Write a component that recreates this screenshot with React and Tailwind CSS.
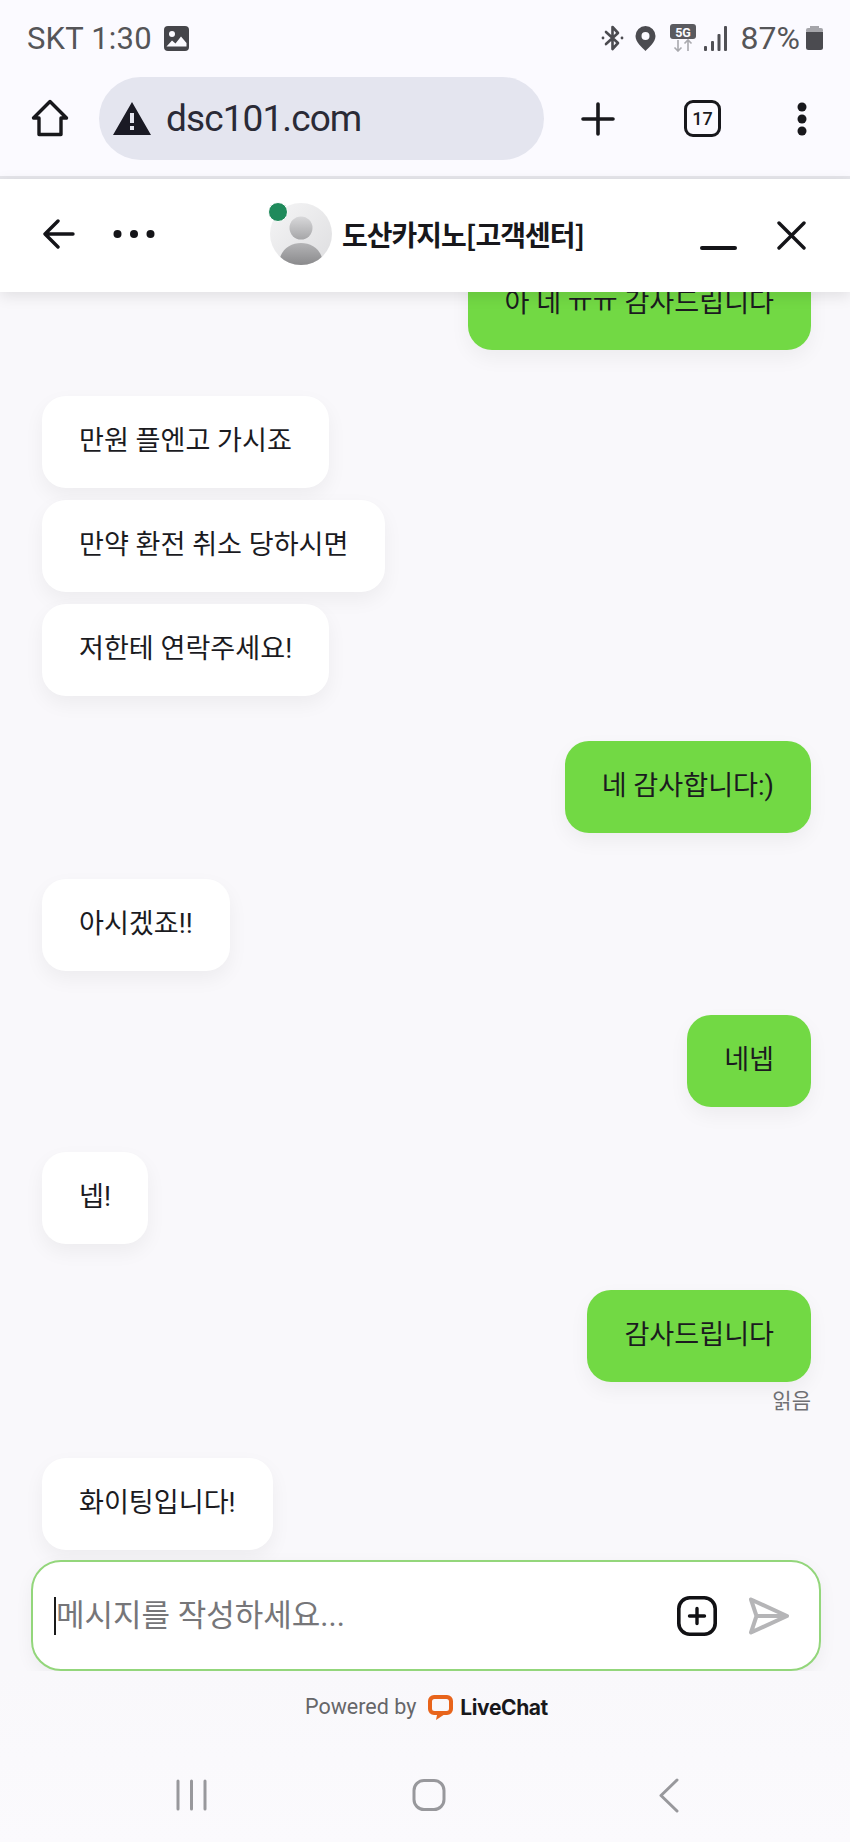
const KR = "font-['Noto_Sans_CJK_KR','Noto_Sans',sans-serif]";

function Bubble({ mine, children, className = "" }) {
  return (
    <div
      className={[
        "h-[92px] flex items-center px-[37px] pb-[2px] rounded-[24px] text-[27.1px] leading-[36px] whitespace-nowrap text-[#1b1b1f] font-['Roboto','Noto_Sans_CJK_KR',sans-serif] shadow-[0_8px_20px_rgba(0,0,0,0.05)]",
        mine ? "self-end mr-[39px] bg-[#72d944]" : "self-start ml-[42px] bg-white",
        className,
      ].join(" ")}
    >
      {children}
    </div>
  );
}

function StatusBar() {
  return (
    <div className="h-[77px] flex items-center pl-[27px] pr-[27px] pb-[1px] text-[#555558] font-['Roboto',sans-serif]">
      <span className="text-[31px] leading-none tracking-[0.2px]">SKT 1:30</span>
      <svg className="ml-[12px]" width="25" height="25" viewBox="0 0 25 25">
        <rect width="25" height="25" rx="4" fill="#45454a" />
        <circle cx="8" cy="8" r="3" fill="#fbfaff" />
        <path d="M2.5 20.5 L8 14.5 L11.5 17.5 L17 10.5 L22.5 17 V20.5 Z" fill="#fbfaff" />
      </svg>
      <div className="flex-1" />
      <svg width="23" height="28" viewBox="0 0 23 28" fill="none" stroke="#4b4b50" strokeWidth="2.6" strokeLinejoin="round" strokeLinecap="round">
        <path d="M5 8 L17 19 L11.5 25 V3 L17 9 L5 20" />
        <circle cx="2" cy="14" r="1.4" fill="#4b4b50" stroke="none" />
        <circle cx="21" cy="14" r="1.4" fill="#4b4b50" stroke="none" />
      </svg>
      <svg className="ml-[11px]" width="21" height="25" viewBox="0 0 21 25">
        <path fillRule="evenodd" d="M10.5 0 A10 10 0 0 1 20.5 10 C20.5 16 14 21.5 10.5 25 C7 21.5 0.5 16 0.5 10 A10 10 0 0 1 10.5 0 Z M10.5 6 A4 4 0 1 0 10.5 14 A4 4 0 1 0 10.5 6 Z" fill="#4b4b50" />
      </svg>
      <svg className="ml-[14px]" width="26" height="28" viewBox="0 0 26 28">
        <rect width="26" height="15" rx="3" fill="#5a5a5f" />
        <text x="13" y="12.5" textAnchor="middle" fontSize="12.5" fontWeight="700" fill="#fbfaff" fontFamily="Roboto">5G</text>
        <path d="M8 16 V27 M4.5 23.5 L8 27 L11.5 23.5" stroke="#a9a9ae" strokeWidth="1.6" fill="none" />
        <path d="M18 27 V16 M14.5 19.5 L18 16 L21.5 19.5" stroke="#a9a9ae" strokeWidth="1.6" fill="none" />
      </svg>
      <svg className="ml-[8px]" width="23" height="25" viewBox="0 0 23 25" fill="#4f4f54">
        <rect x="0" y="20" width="3" height="5" rx="1" />
        <rect x="7" y="15" width="3" height="10" rx="1" />
        <rect x="13.5" y="8" width="3" height="17" rx="1" />
        <rect x="20" y="0" width="3" height="25" rx="1" />
      </svg>
      <span className="ml-[14px] text-[32px] leading-none">87%</span>
      <svg className="ml-[6px]" width="17" height="24" viewBox="0 0 17 24">
        <rect x="4" width="9" height="3" fill="#a5a5aa" />
        <rect y="2" width="17" height="5" rx="2" fill="#a5a5aa" />
        <path d="M0 6 H17 V21.5 Q17 24 14.5 24 H2.5 Q0 24 0 21.5 Z" fill="#4b4b50" />
      </svg>
    </div>
  );
}

function BrowserBar() {
  return (
    <div className="h-[102px] flex items-start border-b-[3px] border-[#e5e5ea] text-[#1b1b22]">
      <svg className="ml-[31px] mt-[22px]" width="38" height="38" viewBox="0 0 38 38" fill="none" stroke="#18181c" strokeWidth="3.4" strokeLinejoin="round" strokeLinecap="round">
        <path d="M2.5 19 L19 2.5 L35.5 19 H30 V35.5 H8 V19 Z" />
      </svg>
      <div className="ml-[30px] w-[445px] h-[83px] rounded-full bg-[#e4e5ef] flex items-center pl-[14px]">
        <svg width="38" height="33" viewBox="0 0 38 33">
          <path fillRule="evenodd" d="M19 0 L38 33 H0 Z M17 11 V21 H21 V11 Z M17 24 V28 H21 V24 Z" fill="#1a1a24" />
        </svg>
        <span className="ml-[15px] text-[37px] leading-none font-['Roboto',sans-serif] text-[#2a2a36] tracking-[-0.9px]">dsc101.com</span>
      </div>
      <svg className="ml-[37px] mt-[25px]" width="34" height="34" viewBox="0 0 34 34" stroke="#18181c" strokeWidth="3.6" strokeLinecap="round">
        <path d="M2 17 H32 M17 2 V32" />
      </svg>
      <div className="ml-[69px] mt-[23px] w-[37px] h-[37px] rounded-[9px] border-[3.5px] border-[#18181c] flex items-center justify-center text-[18px] font-medium font-['Roboto',sans-serif] leading-none">
        17
      </div>
      <svg className="ml-[76px] mt-[25px]" width="10" height="34" viewBox="0 0 10 34" fill="#18181c">
        <circle cx="5" cy="5" r="4.5" />
        <circle cx="5" cy="17" r="4.5" />
        <circle cx="5" cy="29" r="4.5" />
      </svg>
    </div>
  );
}

function Avatar() {
  return (
    <div className="relative w-[62px] h-[62px]">
      <svg width="62" height="62" viewBox="0 0 62 62">
        <defs>
          <linearGradient id="avBg" x1="0" y1="0" x2="1" y2="1">
            <stop offset="0" stopColor="#f5f5f6" />
            <stop offset="1" stopColor="#dedee0" />
          </linearGradient>
          <linearGradient id="avHead" x1="0" y1="0" x2="0" y2="1">
            <stop offset="0" stopColor="#d8d8da" />
            <stop offset="1" stopColor="#a6a6a8" />
          </linearGradient>
          <linearGradient id="avBody" x1="0" y1="0" x2="0" y2="1">
            <stop offset="0" stopColor="#b4b4b6" />
            <stop offset="1" stopColor="#8a8a8c" />
          </linearGradient>
          <clipPath id="avClip">
            <circle cx="31" cy="31" r="31" />
          </clipPath>
        </defs>
        <circle cx="31" cy="31" r="31" fill="url(#avBg)" />
        <g clipPath="url(#avClip)">
          <circle cx="31" cy="25" r="11.5" fill="url(#avHead)" />
          <path d="M9 62 C9 47 20 40 31 40 C42 40 53 47 53 62 Z" fill="url(#avBody)" />
        </g>
      </svg>
      <div className="absolute left-[-2px] top-[-1px] w-[20px] h-[20px] rounded-full bg-[#1f8a5b] border-[1px] border-white" />
    </div>
  );
}

function ChatHeader() {
  return (
    <div className="relative z-10 h-[113px] shrink-0 pb-[3px] bg-white flex items-center shadow-[0_4px_14px_rgba(0,0,0,0.10)]">
      <svg className="ml-[43px]" width="32" height="30" viewBox="0 0 32 30" fill="none" stroke="#141418" strokeWidth="3.4" strokeLinecap="round" strokeLinejoin="round">
        <path d="M30 15 H3 M15 2 L2 15 L15 28" />
      </svg>
      <svg className="ml-[38px]" width="42" height="10" viewBox="0 0 42 10" fill="#141418">
        <circle cx="4.5" cy="5" r="4" />
        <circle cx="21" cy="5" r="4" />
        <circle cx="37.5" cy="5" r="4" />
      </svg>
      <div className="ml-[115px]">
        <Avatar />
      </div>
      <span className="ml-[10px] text-[28px] font-bold leading-none tracking-[-1px] text-[#17171b] whitespace-nowrap">
        도산카지노[고객센터]
      </span>
      <div className="ml-[116px] mt-[27px] w-[37px] h-[4px] rounded-full bg-[#141418]" />
      <svg className="ml-[40px] mt-[2px]" width="29" height="29" viewBox="0 0 29 29" stroke="#141418" strokeWidth="3.4" strokeLinecap="round">
        <path d="M2 2 L27 27 M27 2 L2 27" />
      </svg>
    </div>
  );
}

function Messages() {
  return (
    <div className="flex-1 min-h-0 overflow-hidden flex flex-col justify-end pb-[10px]">
      <Bubble mine className="shrink-0">아 네 ㅠㅠ 감사드립니다</Bubble>
      <Bubble className="shrink-0 mt-[46px]">만원 플엔고 가시죠</Bubble>
      <Bubble className="shrink-0 mt-[12px]">만약 환전 취소 당하시면</Bubble>
      <Bubble className="shrink-0 mt-[12px]">저한테 연락주세요!</Bubble>
      <Bubble mine className="shrink-0 mt-[45px]">네 감사합니다:)</Bubble>
      <Bubble className="shrink-0 mt-[46px]">아시겠죠!!</Bubble>
      <Bubble mine className="shrink-0 mt-[44px]">네넵</Bubble>
      <Bubble className="shrink-0 mt-[45px]">넵!</Bubble>
      <Bubble mine className="shrink-0 mt-[46px]">감사드립니다</Bubble>
      <div className="shrink-0 self-end mr-[39px] mt-[5px] h-[24px] text-[21px] leading-[24px] text-[#6f6f73]">읽음</div>
      <Bubble className="shrink-0 mt-[47px]">화이팅입니다!</Bubble>
    </div>
  );
}

function Composer() {
  return (
    <div className="mx-[31px] w-[790px] h-[111px] shrink-0 rounded-[30px] border-[2px] border-[#93d67b] bg-white flex items-center shadow-[0_6px_18px_rgba(0,0,0,0.05)]">
      <div className="ml-[21px] w-[2px] h-[38px] bg-[#1a1a1a]" />
      <span className="text-[31px] leading-none text-[#767679] whitespace-nowrap font-['Roboto','Noto_Sans_CJK_KR',sans-serif]">메시지를 작성하세요...</span>
      <div className="flex-1" />
      <svg width="40" height="40" viewBox="0 0 40 40" fill="none" stroke="#111114">
        <rect x="1.8" y="1.8" width="36.4" height="36.4" rx="11" strokeWidth="3.6" />
        <path d="M20 12.5 V27.5 M12.5 20 H27.5" strokeWidth="3.4" strokeLinecap="round" />
      </svg>
      <svg className="ml-[32px] mr-[30px]" width="40" height="38" viewBox="0 0 40 38" fill="none" stroke="#b5b5b7" strokeWidth="4" strokeLinejoin="round" strokeLinecap="round">
        <path d="M2 2.5 L38 19 L2 35.5 L7.5 19 Z M7.5 19 H38" />
      </svg>
    </div>
  );
}

function PoweredBy() {
  return (
    <div className="h-[73px] shrink-0 flex items-center pl-[305px] pb-[1px]">
      <span className="text-[21.5px] leading-none text-[#666669] font-['Roboto',sans-serif]">Powered by</span>
      <svg className="ml-[12px]" width="25" height="25" viewBox="0 0 25 25">
        <path fillRule="evenodd" d="M6 0 H19 A6 6 0 0 1 25 6 V14 A6 6 0 0 1 19 20 H15.5 L8 25 L9 20 H6 A6 6 0 0 1 0 14 V6 A6 6 0 0 1 6 0 Z M6.5 4 A2.5 2.5 0 0 0 4 6.5 V13.5 A2.5 2.5 0 0 0 6.5 16 H18.5 A2.5 2.5 0 0 0 21 13.5 V6.5 A2.5 2.5 0 0 0 18.5 4 Z" fill="#e8641b" />
      </svg>
      <span className="ml-[7px] text-[21px] leading-none font-bold tracking-[-0.4px] text-[#18181b] font-['Inter',sans-serif]">LiveChat</span>
    </div>
  );
}

function NavBar() {
  return (
    <div className="flex-1 flex items-start">
      <svg className="ml-[176px] mt-[35px]" width="31" height="32" viewBox="0 0 31 32" stroke="#98989c" strokeWidth="3" strokeLinecap="round">
        <path d="M2 2 V30 M15.5 2 V30 M29 2 V30" />
      </svg>
      <svg className="ml-[205px] mt-[35px]" width="34" height="32" viewBox="0 0 34 32" fill="none" stroke="#98989c" strokeWidth="3">
        <rect x="2" y="1.5" width="30" height="29" rx="10" />
      </svg>
      <svg className="ml-[213px] mt-[34px]" width="20" height="35" viewBox="0 0 20 35" fill="none" stroke="#98989c" strokeWidth="3" strokeLinecap="round" strokeLinejoin="round">
        <path d="M18 2 L2 17.5 L18 33" />
      </svg>
    </div>
  );
}

export default function App() {
  return (
    <div className={`${KR} w-[850px] h-[1842px] overflow-hidden flex flex-col bg-[#f9f8fb]`}>
      <div className="bg-[#fbfaff] shrink-0">
        <StatusBar />
        <BrowserBar />
      </div>
      <ChatHeader />
      <Messages />
      <Composer />
      <div className="shrink-0 h-[171px] flex flex-col bg-gradient-to-b from-[#f9f8fb] to-[#fbfafd]">
        <PoweredBy />
        <NavBar />
      </div>
    </div>
  );
}
